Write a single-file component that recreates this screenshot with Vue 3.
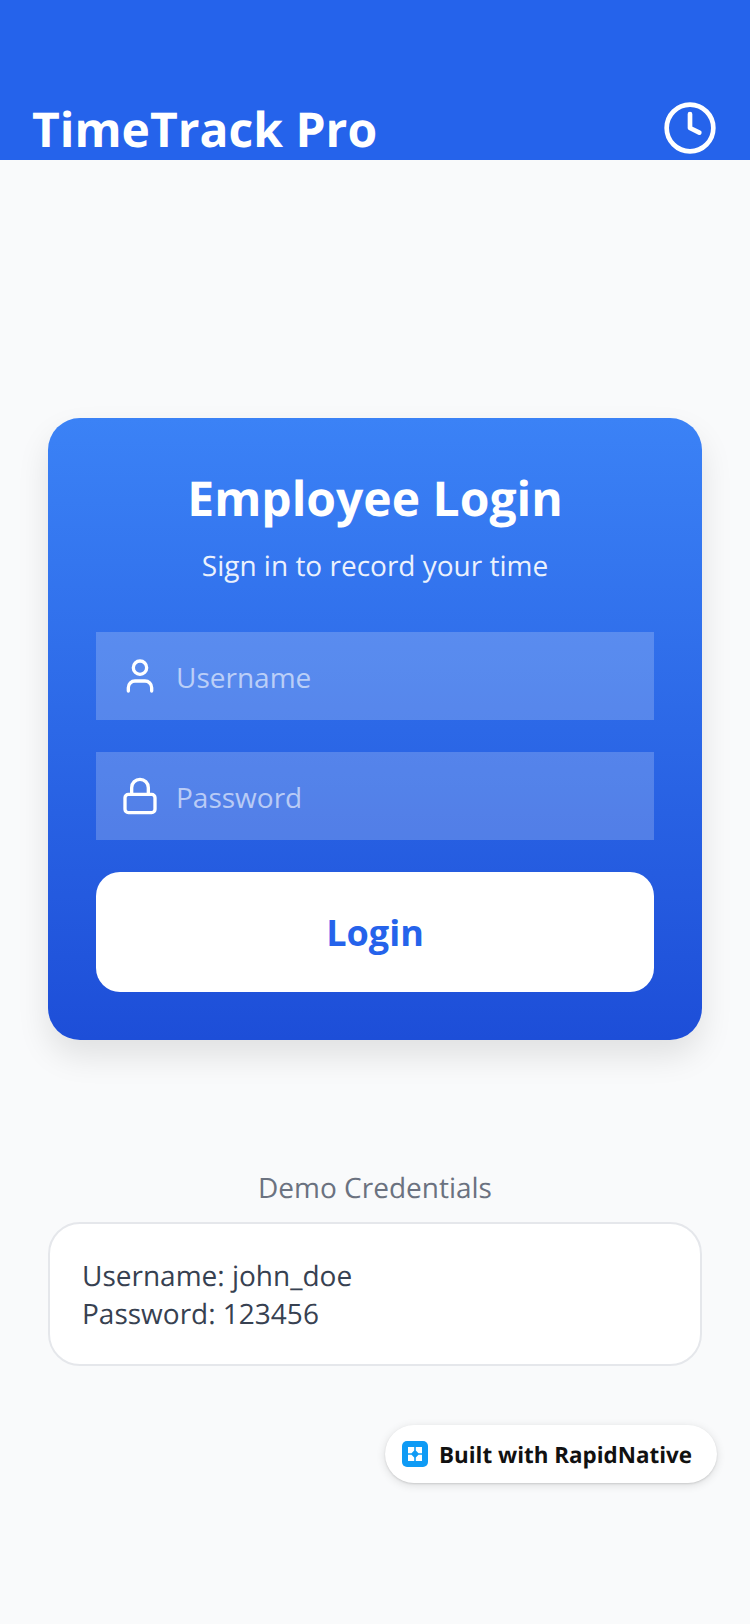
<script setup>
const username = ''
</script>

<template>
  <div class="page">
    <header class="header">
      <h1 class="brand">TimeTrack Pro</h1>
      <svg class="clock" viewBox="0 0 24 24" fill="none" stroke="#fff" stroke-width="2" stroke-linecap="round" stroke-linejoin="round">
        <circle cx="12" cy="12" r="10" />
        <path d="M12 6v6l4 2" />
      </svg>
    </header>

    <main class="main">
      <section class="card">
        <h2 class="card-title">Employee Login</h2>
        <p class="card-sub">Sign in to record your time</p>

        <label class="field">
          <svg class="field-icon" viewBox="0 0 24 24" fill="none" stroke="#fff" stroke-width="2" stroke-linecap="round" stroke-linejoin="round">
            <path d="M19 21v-2a4 4 0 0 0-4-4H9a4 4 0 0 0-4 4v2" />
            <circle cx="12" cy="7" r="4" />
          </svg>
          <input class="input" type="text" placeholder="Username" :value="username" />
        </label>

        <label class="field">
          <svg class="field-icon" viewBox="0 0 24 24" fill="none" stroke="#fff" stroke-width="2" stroke-linecap="round" stroke-linejoin="round">
            <rect x="3" y="11" width="18" height="11" rx="2" ry="2" />
            <path d="M7 11V7a5 5 0 0 1 10 0v4" />
          </svg>
          <input class="input" type="password" placeholder="Password" />
        </label>

        <button class="login" type="button">Login</button>
      </section>

      <p class="demo-label">Demo Credentials</p>
      <section class="demo-card">
        <p class="demo-line">Username: john_doe</p>
        <p class="demo-line">Password: 123456</p>
      </section>
    </main>

    <div class="badge">
      <svg class="badge-logo" viewBox="0 0 26 26">
        <rect width="26" height="26" rx="5" fill="#0f9bf5" />
        <path d="M6 6h6.200v3.500l-2.700 2.700H6zM13.800 6H20v6.200h-3.500l-2.700-2.700zM6 13.800h3.500l2.700 2.700V20H6zM16.500 13.800H20V20h-6.200v-3.500z" fill="#fff" />
      </svg>
      <span class="badge-text">Built with RapidNative</span>
    </div>
  </div>
</template>

<style>
html, body { margin: 0; padding: 0; background: #f9fafb; }
</style>

<style scoped>
.page {
  position: relative;
  width: 750px;
  height: 1624px;
  overflow: hidden;
  background: #f9fafb;
  font-family: "Open Sans", sans-serif;
  text-rendering: geometricPrecision;
}
.header {
  box-sizing: border-box;
  height: 160px;
  padding: 0 32px;
  background: #2563eb;
  display: flex;
  justify-content: space-between;
  align-items: flex-end;
}
.brand {
  margin: 0 0 -2px;
  font-size: 48px;
  line-height: 64px;
  font-weight: 700;
  color: #fff;
}
.clock {
  width: 56px;
  height: 56px;
  margin: 0 0 4px;
}
.main {
  padding: 258px 48px 0;
}
.card {
  box-sizing: border-box;
  height: 622px;
  padding: 48px;
  border-radius: 32px;
  background: linear-gradient(180deg, #3b82f6 0%, #1d4ed8 100%);
  box-shadow: 0 16px 32px rgba(0, 0, 0, 0.1);
}
.card-title {
  margin: 1px 0 0;
  text-align: center;
  font-size: 48px;
  line-height: 64px;
  font-weight: 700;
  color: #fff;
}
.card-sub {
  margin: 15px 0 46px;
  text-align: center;
  font-size: 28px;
  line-height: 40px;
  color: #fff;
  opacity: 0.9;
}
.field {
  height: 88px;
  margin-bottom: 32px;
  padding: 0 32px 0 24px;
  display: flex;
  align-items: center;
  gap: 16px;
  background: rgba(255, 255, 255, 0.2);
}
.field-icon {
  width: 40px;
  height: 40px;
  flex: none;
}
.input {
  flex: 1;
  min-width: 0;
  height: 100%;
  padding: 2px 0 0;
  box-sizing: border-box;
  border: 0;
  outline: 0;
  background: transparent;
  font-family: inherit;
  font-size: 28px;
  color: #fff;
}
.input::placeholder {
  color: rgba(255, 255, 255, 0.6);
  opacity: 1;
}
.login {
  display: block;
  width: 100%;
  height: 120px;
  padding: 0;
  border: 0;
  border-radius: 24px;
  background: #fff;
  font-family: inherit;
  font-size: 36px;
  font-weight: 700;
  color: #2563eb;
}
.demo-label {
  margin: 128px 0 14px;
  text-align: center;
  font-size: 28px;
  line-height: 40px;
  color: #6b7280;
}
.demo-card {
  box-sizing: border-box;
  padding: 33px 32px 31px;
  background: #fff;
  border: 2px solid #e5e7eb;
  border-radius: 32px;
}
.demo-line {
  margin: 0;
  font-size: 28px;
  line-height: 38px;
  color: #374151;
}
.badge {
  position: absolute;
  left: 385px;
  top: 1425px;
  box-sizing: border-box;
  width: 332px;
  height: 58px;
  padding: 0 17px;
  display: flex;
  align-items: center;
  gap: 11px;
  border-radius: 29px;
  background: #fff;
  box-shadow: 0 1px 2px rgba(0, 0, 0, 0.12), 0 2px 10px rgba(0, 0, 0, 0.12);
}
.badge-logo {
  width: 26px;
  height: 26px;
  flex: none;
}
.badge-text {
  font-size: 22.4px;
  font-weight: 700;
  color: #111;
  white-space: nowrap;
}
</style>
